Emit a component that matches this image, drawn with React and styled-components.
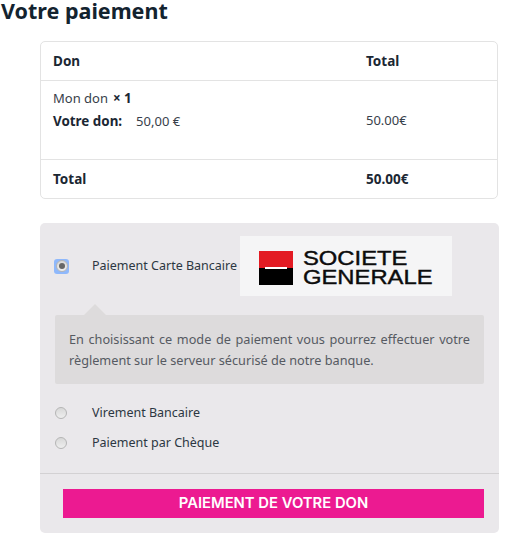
import React from 'react';
import styled, { createGlobalStyle } from 'styled-components';

const GlobalStyle = createGlobalStyle`
  html, body {
    margin: 0;
    padding: 0;
    background: #fff;
  }
  body {
    font-family: 'Noto Sans', sans-serif;
    font-size: 14px;
    color: #37404a;
  }
`;

const S = {
  Page: styled.div`
    width: 507px;
    height: 541px;
  `,
  Title: styled.h2`
    margin: 0;
    padding-left: 1px;
    height: 41px;
    font-size: 21.5px;
    line-height: 22px;
    font-weight: 700;
    color: #13232f;
  `,
  Table: styled.div`
    margin-left: 40px;
    width: 458px;
    height: 158px;
    box-sizing: border-box;
    border: 1px solid #e3e3e3;
    border-radius: 5px;
    display: grid;
    grid-template-rows: 38px 79px 1fr;
  `,
  Row: styled.div`
    display: grid;
    grid-template-columns: 313px 1fr;
    padding-left: 12px;
    align-items: center;
    border-top: ${props => (props.$first ? 'none' : '1px solid #e3e3e3')};
  `,
  Head: styled.span`
    font-size: 13.5px;
    font-weight: 700;
    color: #1b2733;
  `,
  Cell: styled.div`
    display: flex;
    flex-direction: column;
    gap: 5px;
    padding-bottom: 22px;
  `,
  Line: styled.div`
    display: flex;
    align-items: baseline;
    height: 18px;
    line-height: 18px;
    font-size: 13px;
  `,
  Strong: styled.strong`
    font-size: 13.4px;
    font-weight: 700;
    color: #1b2733;
    margin-left: ${props => props.$gap || 0}px;
    margin-right: ${props => props.$after || 0}px;
  `,
  Amount: styled.span`
    font-size: 13px;
    padding-bottom: 1px;
  `,
  Panel: styled.form`
    margin: 24px 0 0 40px;
    width: 459px;
    height: 310px;
    box-sizing: border-box;
    background: #eae8eb;
    border-radius: 5px;
    display: flex;
    flex-direction: column;
  `,
  MethodTop: styled.div`
    display: flex;
    align-items: center;
    margin-top: 13px;
    height: 60px;
    padding-left: 15px;
  `,
  Method: styled.div`
    display: flex;
    align-items: center;
    height: 30px;
    padding-left: 15px;
  `,
  Ring: styled.span`
    width: 15px;
    height: 15px;
    margin: 0 -2px 0 -1px;
    flex: none;
    border-radius: 3px;
    background: #8fb8fb;
    display: flex;
    align-items: center;
    justify-content: center;
  `,
  Radio: styled.span`
    width: 12px;
    height: 12px;
    box-sizing: border-box;
    flex: none;
    border-radius: 50%;
    border: 1px solid #b5b5b5;
    background: linear-gradient(#d8d8d8, #eeeeee);
    display: flex;
    align-items: center;
    justify-content: center;
  `,
  Dot: styled.span`
    width: 6px;
    height: 6px;
    border-radius: 50%;
    background: #666;
  `,
  Label: styled.label`
    margin-left: 25px;
    font-size: 12.5px;
    line-height: 18px;
    padding-bottom: ${props => (props.$raised ? 1 : 0)}px;
    color: #2c3742;
    white-space: nowrap;
  `,
  Logo: styled.div`
    margin-left: 3px;
    width: 212px;
    height: 60px;
    box-sizing: border-box;
    padding: 4px 0 0 19px;
    background: #f5f5f6;
    display: flex;
    align-items: center;
    gap: 10px;
  `,
  LogoText: styled.div`
    font-family: 'Liberation Sans', sans-serif;
    font-size: 19.5px;
    line-height: 19px;
    color: #0c0c0c;
    -webkit-text-stroke: 0.4px #0c0c0c;
    white-space: nowrap;
    transform: scaleX(1.22);
    transform-origin: left center;
  `,
  Notice: styled.div`
    position: relative;
    margin: 19px 15px 0;
    padding: 14px 14px 0;
    height: 69px;
    box-sizing: border-box;
    background: #dddbdc;
    border-radius: 2px;
    font-size: 12.7px;
    line-height: 21px;
    color: #565a62;
    text-align: justify;
    &::before {
      content: '';
      position: absolute;
      top: -11px;
      left: 29px;
      border-left: 11px solid transparent;
      border-right: 11px solid transparent;
      border-bottom: 11px solid #dddbdc;
    }
  `,
  Others: styled.div`
    margin-top: 14px;
    display: flex;
    flex-direction: column;
  `,
  Footer: styled.div`
    margin-top: 15px;
    border-top: 1px solid #d3d1d3;
    padding: 15px 15px 0 23px;
  `,
  Button: styled.button`
    display: block;
    width: 100%;
    height: 29px;
    padding: 0 0 2px;
    border: none;
    background: #ec1a91;
    color: #fff;
    font-family: 'Inter', sans-serif;
    font-size: 14.8px;
    font-weight: 600;
    cursor: pointer;
  `,
};

const SgMark = () => (
  <svg width="34" height="34" viewBox="0 0 34 34">
    <rect width="34" height="17" fill="#e31b23" />
    <rect y="17" width="34" height="17" fill="#000" />
    <rect x="6" y="16" width="22" height="2" fill="#fff" />
  </svg>
);

const App = () => (
  <S.Page>
    <GlobalStyle />
    <S.Title>Votre paiement</S.Title>
    <S.Table>
      <S.Row $first>
        <S.Head>Don</S.Head>
        <S.Head>Total</S.Head>
      </S.Row>
      <S.Row>
        <S.Cell>
          <S.Line>
            Mon don<S.Strong $gap={5}>× 1</S.Strong>
          </S.Line>
          <S.Line>
            <S.Strong $after={14}>Votre don:</S.Strong>50,00 €
          </S.Line>
        </S.Cell>
        <S.Amount>50.00€</S.Amount>
      </S.Row>
      <S.Row>
        <S.Head>Total</S.Head>
        <S.Head>50.00€</S.Head>
      </S.Row>
    </S.Table>
    <S.Panel>
      <S.MethodTop>
        <S.Ring>
          <S.Radio>
            <S.Dot />
          </S.Radio>
        </S.Ring>
        <S.Label $raised>Paiement Carte Bancaire</S.Label>
        <S.Logo>
          <SgMark />
          <S.LogoText>
            SOCIETE
            <br />
            GENERALE
          </S.LogoText>
        </S.Logo>
      </S.MethodTop>
      <S.Notice>
        En choisissant ce mode de paiement vous pourrez effectuer votre règlement sur le serveur sécurisé de notre banque.
      </S.Notice>
      <S.Others>
        <S.Method>
          <S.Radio />
          <S.Label>Virement Bancaire</S.Label>
        </S.Method>
        <S.Method>
          <S.Radio />
          <S.Label>Paiement par Chèque</S.Label>
        </S.Method>
      </S.Others>
      <S.Footer>
        <S.Button type="button">PAIEMENT DE VOTRE DON</S.Button>
      </S.Footer>
    </S.Panel>
  </S.Page>
);

export default App;
